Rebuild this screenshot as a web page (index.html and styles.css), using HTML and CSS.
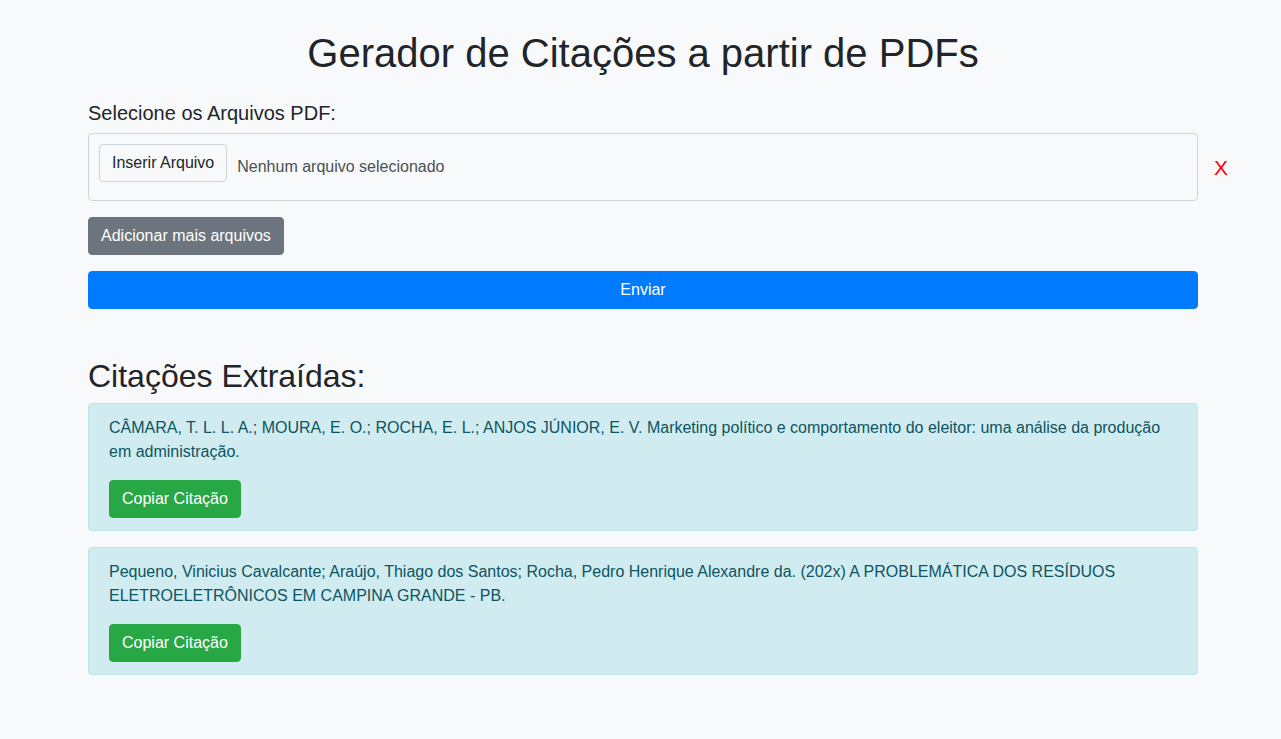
FILE: index.html
```html
<!DOCTYPE html>
<html lang="pt-BR">
<head>
<meta charset="utf-8">
<title>Gerador de Citações a partir de PDFs</title>
<link rel="stylesheet" href="styles.css">
</head>
<body>
<div class="container">
  <h1 class="title">Gerador de Citações a partir de PDFs</h1>
  <form class="upload-form">
    <label class="form-label">Selecione os Arquivos PDF:</label>
    <div class="file-row">
      <div class="file-box">
        <span class="file-btn">Inserir Arquivo</span>
        <span class="file-name">Nenhum arquivo selecionado</span>
      </div>
      <span class="remove-btn">X</span>
    </div>
    <div class="actions">
      <button type="button" class="btn btn-secondary">Adicionar mais arquivos</button>
    </div>
    <button type="button" class="btn btn-primary btn-block">Enviar</button>
  </form>

  <h2 class="subtitle">Citações Extraídas:</h2>
  <div class="alert">
    <p class="alert-text">CÂMARA, T. L. L. A.; MOURA, E. O.; ROCHA, E. L.; ANJOS JÚNIOR, E. V. Marketing político e comportamento do eleitor: uma análise da produção em administração.</p>
    <button type="button" class="btn btn-success">Copiar Citação</button>
  </div>
  <div class="alert">
    <p class="alert-text">Pequeno, Vinicius Cavalcante; Araújo, Thiago dos Santos; Rocha, Pedro Henrique Alexandre da. (202x) A PROBLEMÁTICA DOS RESÍDUOS ELETROELETRÔNICOS EM CAMPINA GRANDE - PB.</p>
    <button type="button" class="btn btn-success">Copiar Citação</button>
  </div>
</div>
</body>
</html>
```

FILE: styles.css
```css
* { box-sizing: border-box; }

html, body {
  margin: 0;
  padding: 0;
}

body {
  background: #f8f9fa;
  color: #212529;
  font-family: "Liberation Sans", Arial, sans-serif;
  font-size: 16px;
  line-height: 1.5;
}

.container {
  width: 1110px;
  margin-left: 88px;
  padding-top: 29px;
  padding-bottom: 40px;
}

.title {
  margin: 0 0 24px;
  font-size: 40px;
  font-weight: 400;
  line-height: 48px;
  text-align: center;
}

.upload-form {
  display: flex;
  flex-direction: column;
}

.form-label {
  display: block;
  font-size: 20px;
  line-height: 24px;
  margin-bottom: 8px;
}

.file-row {
  display: flex;
  align-items: center;
  gap: 16px;
  width: 1110px;
}

.file-box {
  flex: 0 0 1110px;
  display: flex;
  align-items: center;
  gap: 10px;
  height: 68px;
  padding: 10px;
  border: 1px solid #ced4da;
  border-radius: 4px;
}

.file-btn {
  align-self: flex-start;
  display: inline-block;
  padding: 6px 12px;
  border: 1px solid #ced4da;
  border-radius: 4px;
  background: #f8f9fa;
  color: #212529;
  line-height: 24px;
}

.file-name {
  color: #495057;
}

.remove-btn {
  color: #ff0000;
  font-size: 21px;
  line-height: 24px;
  padding-top: 2px;
}

.actions {
  margin-top: 16px;
}

.btn {
  display: inline-block;
  font-family: inherit;
  font-size: 16px;
  line-height: 24px;
  padding: 6px 12px;
  border: 1px solid transparent;
  border-radius: 4px;
  color: #fff;
  cursor: pointer;
}

.btn-secondary {
  background: #6c757d;
  border-color: #6c757d;
}

.btn-primary {
  background: #007bff;
  border-color: #007bff;
}

.btn-block {
  display: block;
  width: 100%;
  margin-top: 16px;
}

.btn-success {
  background: #28a745;
  border-color: #28a745;
}

.subtitle {
  margin: 48px 0 8px;
  font-size: 32px;
  font-weight: 400;
  line-height: 38px;
}

.alert {
  padding: 12px 20px;
  margin-bottom: 16px;
  background: #d1ecf1;
  border: 1px solid #bee5eb;
  border-radius: 4px;
  color: #0c5460;
}

.alert-text {
  margin: 0 0 16px;
}
```
